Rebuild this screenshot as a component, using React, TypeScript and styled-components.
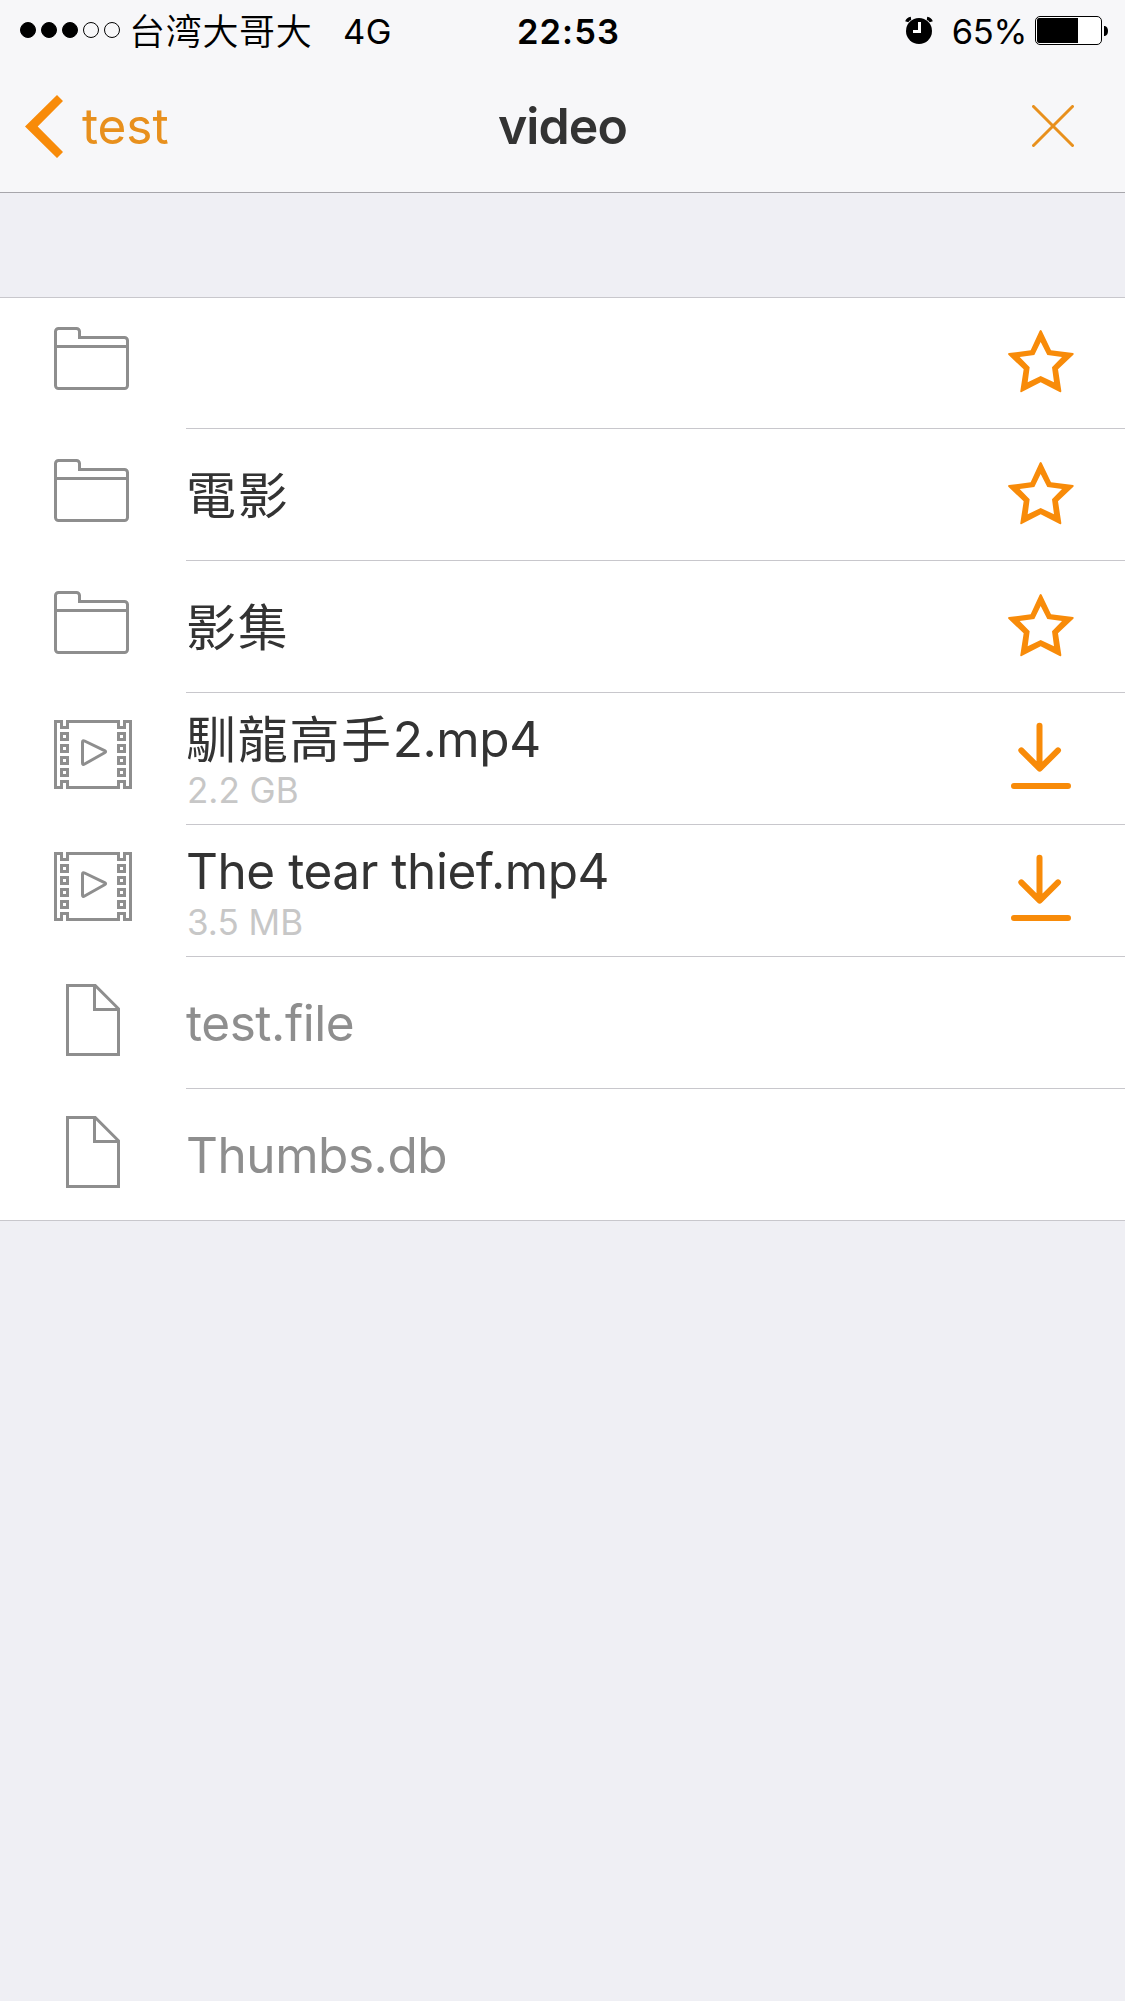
import React from 'react';
import styled, { createGlobalStyle, css } from 'styled-components';

const ORANGE = '#f88b09';
const GRAY = '#8e8e8e';
const LINE = '#c8c7cc';

const GlobalStyle = createGlobalStyle`
  html, body { margin: 0; padding: 0; background: #efeff4; }
  body { font-family: Inter, "Noto Sans CJK TC", "Liberation Sans", sans-serif; }
  svg { display: block; flex: none; }
`;

const Screen = styled.div`
  display: flex;
  flex-direction: column;
  width: 1125px;
  height: 2001px;
  overflow: hidden;
  background: #efeff4;
`;

const Header = styled.header`
  height: 192px;
  background: #f7f7f9;
  border-bottom: 1px solid #a7a6ab;
`;

const StatusBar = styled.div`
  display: grid;
  grid-template-columns: 1fr auto 1fr;
  height: 60px;
  line-height: 63px;
  font-size: 34.5px;
  color: #000;
  white-space: nowrap;
`;

const StatusLeft = styled.div`
  display: flex;
  padding-left: 20px;
`;

const Signal = styled.div`
  display: flex;
  gap: 5px;
  padding-top: 22px;
`;

const Dot = styled.i<{ $filled: boolean }>`
  box-sizing: border-box;
  width: 16px;
  height: 16px;
  border: 1px solid #000;
  border-radius: 50%;
  background: ${(p) => (p.$filled ? '#000' : 'transparent')};
`;

const Carrier = styled.span`
  margin-left: 9px;
  width: 214px;
  font-family: "Noto Sans CJK SC", sans-serif;
  font-weight: 350;
  font-size: 36px;
  line-height: 58px;
  letter-spacing: 0.7px;
`;

const Network = styled.span`
  letter-spacing: 0.4px;
`;

const Clock = styled.div`
  font-weight: 600;
  letter-spacing: 1.1px;
  padding-left: 12px;
`;

const StatusRight = styled.div`
  display: flex;
  justify-content: flex-end;
  padding-right: 17px;
`;

const AlarmWrap = styled.div`
  padding-top: 16px;
  margin-right: 19px;
`;

const Percent = styled.span`
  margin-right: 8px;
  letter-spacing: -0.3px;
`;

const BatteryWrap = styled.div`
  padding-top: 16px;
`;

const NavBar = styled.nav`
  display: grid;
  grid-template-columns: 1fr auto 1fr;
  height: 132px;
  line-height: 132px;
`;

const BackButton = styled.div`
  display: flex;
  align-items: center;
  gap: 19px;
  padding-left: 25px;
  color: #e8901d;
  font-size: 49.5px;
`;

const BackLabel = styled.span`
  letter-spacing: -0.1px;
`;

const Title = styled.h1`
  margin: 0;
  font-size: 50px;
  font-weight: 600;
  letter-spacing: -0.9px;
  color: #333;
`;

const CloseButton = styled.div`
  display: flex;
  align-items: center;
  justify-content: flex-end;
  padding-right: 51px;
`;

const List = styled.main`
  margin-top: 104px;
  background: #fff;
  box-shadow: inset 0 1px 0 ${LINE}, inset 0 -1px 0 ${LINE};
`;

const Row = styled.div`
  display: flex;
  height: 132px;
`;

const IconSlot = styled.div<{ $top: number; $left: number }>`
  box-sizing: border-box;
  flex: none;
  width: 186px;
  padding: ${(p) => p.$top}px 0 0 ${(p) => p.$left}px;
`;

const RowBody = styled.div`
  flex: 1;
  display: flex;
  box-sizing: border-box;
  border-bottom: 1px solid ${LINE};
`;

const Texts = styled.div<{ $double: boolean }>`
  flex: 1;
  padding-top: ${(p) => (p.$double ? 18 : 38)}px;
  white-space: nowrap;
`;

const Name = styled.div<{ $muted: boolean }>`
  height: 56px;
  line-height: 56px;
  font-size: 49.5px;
  letter-spacing: -0.45px;
  color: ${(p) => (p.$muted ? GRAY : '#333')};
`;

const Han = styled.span`
  position: relative;
  top: 1px;
  font-family: "Noto Sans CJK TC", sans-serif;
  font-weight: 400;
  font-size: 50px;
  letter-spacing: 1.7px;
  line-height: 0;
`;

const Size = styled.div`
  height: 46px;
  line-height: 46px;
  padding-left: 1px;
  font-size: 35px;
  color: #c7c7c7;
`;

const ActionSlot = styled.div<{ $kind: 'star' | 'download' }>`
  flex: none;
  box-sizing: border-box;
  width: 117px;
  ${(p) =>
    p.$kind === 'star'
      ? css`
          padding-top: 33px;
        `
      : css`
          padding: 29px 0 0 1px;
        `}
`;

const FolderIcon = () => (
  <svg width="75" height="63" viewBox="0 0 75 63" fill="none" stroke={GRAY} strokeWidth="3">
    <path d="M1.5 4.5a3 3 0 0 1 3-3H22.5a3 3 0 0 1 3 3V10.5H70.5a3 3 0 0 1 3 3V58.5a3 3 0 0 1-3 3H4.5a3 3 0 0 1-3-3Z" />
    <path d="M1.5 19.5H73.5" />
  </svg>
);

const FilmIcon = () => (
  <svg width="78" height="69" viewBox="0 0 78 69" fill="none" stroke={GRAY} strokeWidth="3">
    <path d="M9 1.5H1.5V67.5H9M12 1.5H66M12 67.5H66M69 1.5H76.5V67.5H69" />
    <path d="M7.5 0V7.5H13.5V0M64.5 0V7.5H70.5V0M7.5 69V61.5H13.5V69M64.5 69V61.5H70.5V69" />
    {[13.5, 25.5, 37.5, 49.5].map((y) => (
      <React.Fragment key={y}>
        <rect x="7.5" y={y} width="6" height="6" />
        <rect x="64.5" y={y} width="6" height="6" />
      </React.Fragment>
    ))}
    <path d="M28.5 22.2Q28.5 20 30.6 21L50.6 30.6Q52.6 31.7 50.6 32.8L30.6 44Q28.5 45.2 28.5 43Z" strokeLinejoin="round" />
  </svg>
);

const FileIcon = () => (
  <svg width="54" height="72" viewBox="0 0 54 72" fill="none" stroke={GRAY} strokeWidth="3">
    <path d="M1.5 1.5H29.2L52.5 24.8V70.5H1.5Z" />
    <path d="M28.5 1.5V25.5H52.5" />
  </svg>
);

const StarIcon = () => (
  <svg width="66" height="63" viewBox="144 120 198 189" fill={ORANGE} fillRule="evenodd">
    <path d="M239 122Q242 118 245 122L273 181L339 189Q343 191 340 194L294 238L304 303Q304 308 299 306L242 277L185 306Q180 308 181 303L191 238L145 194Q143 190 147 189L212 181ZM242 156L223 195L179 201L209 232L203 277L242 258L282 277L276 232L306 201L262 195Z" />
  </svg>
);

const DownloadIcon = () => (
  <svg width="62" height="68" viewBox="147 126 186 204" fill="none" stroke={ORANGE} strokeWidth="18" strokeLinecap="round" strokeLinejoin="round">
    <path d="M238.500 137V262M184 211L239 266L294 211M162 318H324" />
  </svg>
);

const ICONS = {
  folder: { Icon: FolderIcon, top: 30, left: 54 },
  film: { Icon: FilmIcon, top: 27, left: 54 },
  file: { Icon: FileIcon, top: 27, left: 66 },
};

type Entry = {
  kind: keyof typeof ICONS;
  han?: string;
  text?: string;
  size?: string;
  action?: 'star' | 'download';
};

const entries: Entry[] = [
  { kind: 'folder', action: 'star' },
  { kind: 'folder', han: '電影', action: 'star' },
  { kind: 'folder', han: '影集', action: 'star' },
  { kind: 'film', han: '馴龍高手', text: '2.mp4', size: '2.2 GB', action: 'download' },
  { kind: 'film', text: 'The tear thief.mp4', size: '3.5 MB', action: 'download' },
  { kind: 'file', text: 'test.file' },
  { kind: 'file', text: 'Thumbs.db' },
];

const EntryRow = ({ entry }: { entry: Entry }) => {
  const { Icon, top, left } = ICONS[entry.kind];
  return (
    <Row>
      <IconSlot $top={top} $left={left}>
        <Icon />
      </IconSlot>
      <RowBody>
        <Texts $double={!!entry.size}>
          <Name $muted={entry.kind === 'file'}>
            {entry.han && <Han>{entry.han}</Han>}
            {entry.text}
          </Name>
          {entry.size && <Size>{entry.size}</Size>}
        </Texts>
        {entry.action && (
          <ActionSlot $kind={entry.action}>
            {entry.action === 'star' ? <StarIcon /> : <DownloadIcon />}
          </ActionSlot>
        )}
      </RowBody>
    </Row>
  );
};

export default function App() {
  return (
    <Screen>
      <GlobalStyle />
      <Header>
        <StatusBar>
          <StatusLeft>
            <Signal>
              {[true, true, true, false, false].map((filled, i) => (
                <Dot key={i} $filled={filled} />
              ))}
            </Signal>
            <Carrier>台湾大哥大</Carrier>
            <Network>4G</Network>
          </StatusLeft>
          <Clock>22:53</Clock>
          <StatusRight>
            <AlarmWrap>
              <svg width="28" height="28" viewBox="0 0 28 28">
                <circle cx="14" cy="15" r="13" fill="#000" />
                <path d="M1.800 5.800A5 5 0 0 1 6 2.400M26.200 5.800A5 5 0 0 0 22 2.400" stroke="#000" strokeWidth="3.400" fill="none" />
                <path d="M14.500 6V15.500H8" stroke="#fff" strokeWidth="3" fill="none" />
              </svg>
            </AlarmWrap>
            <Percent>65%</Percent>
            <BatteryWrap>
              <svg width="73" height="29" viewBox="0 0 73 29">
                <rect x="0.500" y="0.500" width="66" height="28" rx="4.500" fill="#fff" stroke="#000" />
                <path d="M4 2H43V27H4Q2 27 2 25V4Q2 2 4 2Z" fill="#000" />
                <path d="M69 10H70Q73 11 73 15T70 20H69Z" fill="#000" />
              </svg>
            </BatteryWrap>
          </StatusRight>
        </StatusBar>
        <NavBar>
          <BackButton>
            <svg width="38" height="63" viewBox="0 0 38 63" fill={ORANGE}>
              <path d="M32 0L38 6L12.700 31.500L38 57L32 63L0 31.500Z" />
            </svg>
            <BackLabel>test</BackLabel>
          </BackButton>
          <Title>video</Title>
          <CloseButton>
            <svg width="42" height="42" viewBox="0 0 42 42" stroke="#e8901d" strokeWidth="3" strokeLinecap="round">
              <path d="M1.500 1.500L40.500 40.500M40.500 1.500L1.500 40.500" />
            </svg>
          </CloseButton>
        </NavBar>
      </Header>
      <List>
        {entries.map((entry, i) => (
          <EntryRow key={i} entry={entry} />
        ))}
      </List>
    </Screen>
  );
}
